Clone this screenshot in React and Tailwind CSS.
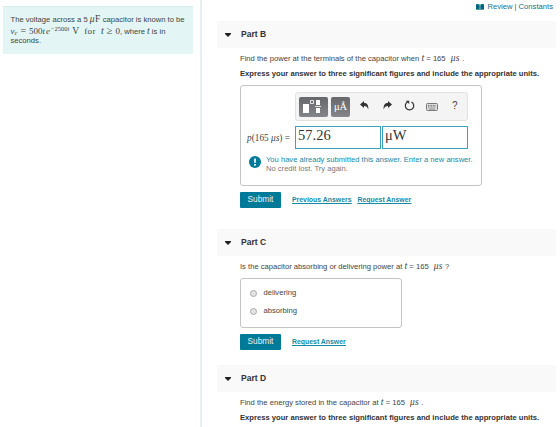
import React, { useState } from "react";

const Var = ({ children, className = "" }) => (
  <span className={`font-['Liberation_Serif'] italic ${className}`}>{children}</span>
);

const Time = () => (
  <>
    <Var className="text-[10px] leading-none">t</Var> = 165 <Var className="ml-[3px] text-[9.5px] leading-none tracking-[0.3px]">μs</Var>
  </>
);

const PartHeader = ({ title }) => (
  <div className="flex h-[27px] shrink-0 items-center bg-[#f9f9f9] pl-2">
    <svg className="mt-[1px] h-[4px] w-[6px]" viewBox="0 0 6 4">
      <path d="M0 0h6v1L3 4 0 1z" fill="#222" />
    </svg>
    <h2 className="mb-[2px] ml-[10px] text-[8.5px] leading-[10px] font-bold text-[#333]">{title}</h2>
  </div>
);

const SubmitRow = ({ links }) => (
  <div className="flex h-4 items-center">
    <button className="h-4 w-[41px] rounded-[1px] bg-[#007a99] pb-[2px] text-[8.3px] leading-[14px] text-[#e8f5f8]">Submit</button>
    <div className="ml-[11px] flex gap-[6px] text-[6.9px] leading-[10px] font-bold text-[#168aa5] underline">
      {links.map((link) => (
        <a key={link} href="#">{link}</a>
      ))}
    </div>
  </div>
);

const Toolbar = () => (
  <div className="flex h-[29px] w-[173px] items-center rounded-[3px] border border-[#e2e2e2] bg-[#f4f4f4] pl-[3px]">
    <button className="h-[20px] w-[29px] rounded-[2px] bg-linear-to-b from-[#66676b] to-[#85868a]">
      <svg className="h-[20px] w-[29px]" viewBox="0 0 29 20">
        <path d="M4 7h6v9H4zM17 3h4v5h-4zM17 11h4v5h-4z" fill="#fff" />
        <path d="M16 9.5h6" stroke="#fff" strokeWidth=".8" />
        <path d="M11.5 3.5h3v3h-3z" fill="none" stroke="#fff" strokeWidth=".8" />
      </svg>
    </button>
    <button className="ml-[3px] h-[20px] w-[19px] rounded-[2px] bg-linear-to-b from-[#66676b] to-[#85868a] font-['Liberation_Serif'] text-[10.5px] leading-[20px] text-white">μÅ</button>
    <svg className="mb-[2px] ml-[10px] h-[9px] w-[9px]" viewBox="0 0 9 9">
      <path d="M4 0v2c3 0 4.7 1.8 4.3 6.5C7.5 6 6.5 5 4 5v2L0 3.5z" fill="#333" />
    </svg>
    <svg className="mb-[2px] ml-[14px] h-[9px] w-[9px]" viewBox="0 0 9 9">
      <path d="M5 0v2C2 2 .3 3.8.7 8.5 1.5 6 2.5 5 5 5v2l4-3.5z" fill="#333" />
    </svg>
    <svg className="mb-[2px] ml-[12px] h-[11px] w-[11px]" viewBox="0 0 11 11">
      <path d="M7.5 2A4.2 4.2 0 1 1 3.6 2" fill="none" stroke="#333" strokeWidth="1.2" />
      <path d="M1.7.7H5.2V4z" fill="#333" />
    </svg>
    <svg className="ml-[11px] h-[8px] w-[12px]" viewBox="0 0 12 8">
      <rect x=".5" y=".5" width="11" height="7" rx="1" fill="#ddd" stroke="#777" />
      <path d="M2 2.5h8M2 4h8" stroke="#777" strokeDasharray="1 .6" />
      <path d="M3 6h6" stroke="#777" strokeWidth=".8" />
    </svg>
    <span className="mb-[2px] ml-[14px] text-[10px] leading-none text-[#444]">?</span>
  </div>
);

const App = () => {
  const [choice, setChoice] = useState(null);

  return (
    <div className="flex h-[427px] w-[560px] overflow-hidden bg-white font-['Liberation_Sans',sans-serif] text-[7.63px] leading-[10px] whitespace-nowrap text-[#444]">
      <aside className="w-[200px] shrink-0 pt-[6px] pl-[3px]">
        <div className="h-[48px] w-[190px] border-t border-[#d9eaea] bg-[#e3f6f5] pt-[7px] pl-[7.5px] text-[#3c4545]">
          <p className="h-[11px] leading-[11px]">
            The voltage across a 5 <Var className="text-[9.5px] leading-none tracking-[0.4px]">μ</Var>
            <span className="font-['Liberation_Serif'] text-[9.5px] leading-none tracking-[0.4px]">F</span> capacitor is known to be
          </p>
          <p className="flex h-[11px] items-baseline leading-[11px]">
            <Var className="text-[9px]">v</Var>
            <Var className="relative top-[1px] text-[6.5px]">c</Var>
            <span className="ml-[3px] font-['Liberation_Serif'] text-[10px]">=</span>
            <span className="ml-[3px] font-['Liberation_Serif'] text-[9px]">500</span>
            <Var className="text-[9px] tracking-[0.9px]">te</Var>
            <span className="relative -top-[3px] font-['Liberation_Serif'] text-[6.5px]">−2500<i>t</i></span>
            <span className="ml-[3px] font-['Liberation_Serif'] text-[9.5px]">V</span>
            <span className="ml-[5px] font-['Liberation_Serif'] text-[9px] tracking-[0.4px]">for</span>
            <Var className="ml-[5px] text-[10px]">t</Var>
            <span className="ml-[3px] font-['Liberation_Serif'] text-[10.5px]">≥</span>
            <span className="ml-[3px] font-['Liberation_Serif'] text-[9px]">0</span>
            <span>, where <Var className="text-[9.5px]">t</Var> is in</span>
          </p>
          <p className="leading-[10px]">seconds.</p>
        </div>
      </aside>

      <main className="w-[360px] shrink-0 border-l-2 border-[#e9eef4] pr-[4px] pl-[15px]">
        <div className="flex h-[21px] items-start justify-end pt-[1.5px] pr-[3px] text-[7.65px] text-[#176f83]">
          <svg className="mt-[2px] mr-[4px] h-[6px] w-[8px]" viewBox="0 0 8 6">
            <path d="M0 .3Q2-.2 3.7.5V6Q2 5.3 0 5.7zM8 .3Q6-.2 4.3.5V6Q6 5.3 8 5.7z" fill="#006778" />
          </svg>
          <a href="#">Review</a>
          <span className="mx-[2px] text-[#555]">|</span>
          <a href="#">Constants</a>
        </div>

        <section className="h-[208px]">
          <PartHeader title="Part B" />
          <div className="pt-[5px] pl-[23px]">
            <p className="h-[10px]">Find the power at the terminals of the capacitor when <Time /> .</p>
            <p className="mt-[5px] h-[10px] pt-[0.5px] font-bold text-[#333]">Express your answer to three significant figures and include the appropriate units.</p>
            <div className="mt-[7px] h-[101px] w-[242px] rounded-[3px] border border-[#c4c4c4] pt-[6px]">
              <div className="ml-[54px]"><Toolbar /></div>
              <div className="mt-[5px] flex h-[23px] items-center">
                <span className="w-[54px] pl-[6px] font-['Liberation_Serif'] text-[9.3px]"><i>p</i>(165 <i>μs</i>) =</span>
                <div className="h-[23px] w-[86px] border border-[#3ba2b8] pl-[2px] font-['Liberation_Serif'] text-[14.5px] leading-[17px] text-[#333]">57.26</div>
                <div className="ml-[1px] h-[23px] w-[86px] border border-[#3ba2b8] pl-[2px] font-['Liberation_Serif'] text-[14.5px] leading-[17px] text-[#333]">μW</div>
              </div>
              <div className="mt-[6px] flex">
                <svg className="mt-[1px] ml-[8px] h-[12px] w-[12px]" viewBox="0 0 12 12">
                  <circle cx="6" cy="6" r="6" fill="#007a99" />
                  <path d="M6 2.5v4.3M6 8v1.7" stroke="#fff" strokeWidth="1.7" />
                </svg>
                <div className="ml-[5px] text-[7.6px] leading-[9px]">
                  <p className="text-[#168aa5]">You have already submitted this answer. Enter a new answer.</p>
                  <p className="text-[#777]">No credit lost. Try again.</p>
                </div>
              </div>
            </div>
            <div className="mt-[6px]"><SubmitRow links={["Previous Answers", "Request Answer"]} /></div>
          </div>
        </section>

        <section className="h-[136px]">
          <PartHeader title="Part C" />
          <div className="pt-[5px] pl-[23px]">
            <p className="h-[10px]">Is the capacitor absorbing or delivering power at <Time /> ?</p>
            <div className="mt-[7px] flex h-[50px] w-[162px] flex-col gap-[8px] rounded-[3px] border border-[#c4c4c4] pt-[9px] pl-[9px]">
              {["delivering", "absorbing"].map((option) => (
                <label key={option} className="flex h-[10px] items-center gap-[6.5px]">
                  <input
                    type="radio"
                    name="power"
                    checked={choice === option}
                    onChange={() => setChoice(option)}
                    className="mt-[1px] h-[7px] w-[7px] appearance-none rounded-full border border-[#aaa] bg-[#e4e4e4] checked:bg-[#555]"
                  />
                  <span>{option}</span>
                </label>
              ))}
            </div>
            <div className="mt-[6px]"><SubmitRow links={["Request Answer"]} /></div>
          </div>
        </section>

        <section>
          <PartHeader title="Part D" />
          <div className="pt-[5px] pl-[23px]">
            <p className="h-[10px]">Find the energy stored in the capacitor at <Time /> .</p>
            <p className="mt-[5px] h-[10px] pt-[0.5px] font-bold text-[#333]">Express your answer to three significant figures and include the appropriate units.</p>
          </div>
        </section>
      </main>
    </div>
  );
};

export default App;
